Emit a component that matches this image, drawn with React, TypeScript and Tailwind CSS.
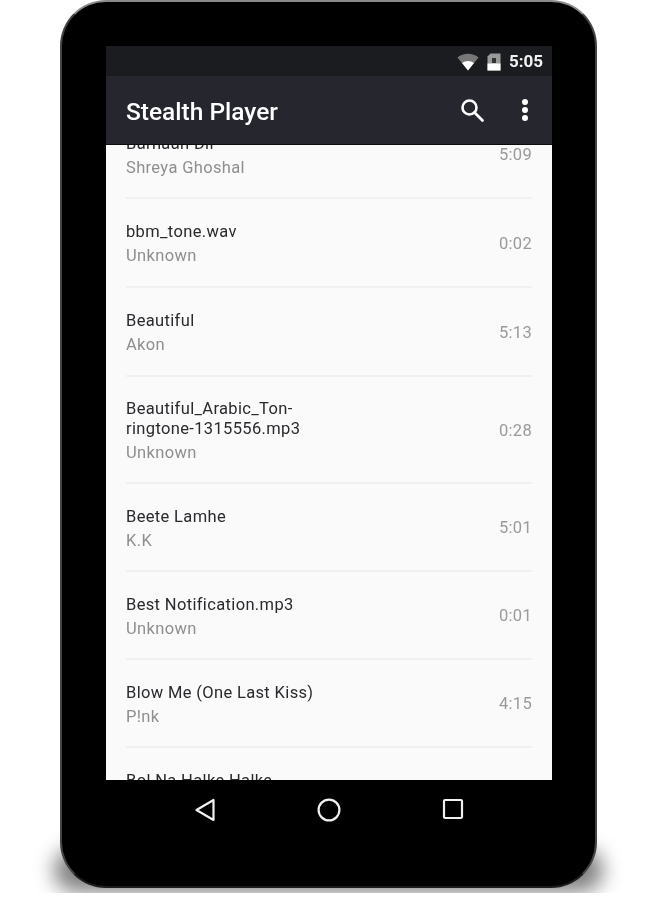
import React from "react";

type Song = { title: string[]; artist: string; time: string; rowClass: string };

const songs: Song[] = [
  { title: ["Barnaan Dil"], artist: "Shreya Ghoshal", time: "5:09", rowClass: "h-[88px]" },
  { title: ["bbm_tone.wav"], artist: "Unknown", time: "0:02", rowClass: "h-[89px]" },
  { title: ["Beautiful"], artist: "Akon", time: "5:13", rowClass: "h-[89px]" },
  { title: ["Beautiful_Arabic_Ton-", "ringtone-1315556.mp3"], artist: "Unknown", time: "0:28", rowClass: "h-[107px]" },
  { title: ["Beete Lamhe"], artist: "K.K", time: "5:01", rowClass: "h-[88px]" },
  { title: ["Best Notification.mp3"], artist: "Unknown", time: "0:01", rowClass: "h-[88px]" },
  { title: ["Blow Me (One Last Kiss)"], artist: "P!nk", time: "4:15", rowClass: "h-[88px]" },
  { title: ["Bol Na Halke Halke"], artist: "Rahat Fateh Ali Khan", time: "5:43", rowClass: "h-[88px]" },
];

function Row({ song }: { song: Song }) {
  return (
    <div className={`flex items-center justify-between border-b-2 border-[#f0f0f0] mx-[20px] pt-[3px] ${song.rowClass}`}>
      <div className="flex flex-col">
        {song.title.map((line) => (
          <div key={line} className="text-[16.5px] leading-[20px] text-[#2a2a2e] tracking-[0.35px]">{line}</div>
        ))}
        <div className="text-[16.5px] leading-[20px] mt-[4px] text-[#8f8f8f] tracking-[0.35px]">{song.artist}</div>
      </div>
      <div className="text-[16.5px] text-[#9a9a9a] tracking-[0.3px]">{song.time}</div>
    </div>
  );
}

export default function App() {
  return (
    <div className="relative w-[656px] h-[900px] bg-white pl-[60px] overflow-hidden font-['Roboto',sans-serif]">
      <div className="absolute left-0 top-0 w-full h-[893px] overflow-hidden">
        <div className="absolute left-[54px] top-[848px] w-[549px] h-[44px] rounded-[26px] bg-black/50 blur-[10px]" />
      </div>
      <div className="relative w-[537px] h-[888px] bg-black rounded-[46px] border-x-2 border-y-2 border-x-[#444444] border-t-[#8a8a8a] border-b-[#1c1c1c] pt-[44px] pl-[44px] flex flex-col blur-[0.4px]">
        <div className="w-[446px] h-[734px] flex flex-col overflow-hidden bg-[#fafafa]">
          <div className="relative z-10 shrink-0">
            <div className="h-[30px] bg-[#1b1c20] flex items-center justify-end pr-[9px] pt-[2px]">
              <svg width="22" height="18" viewBox="0 0 22 18" className="mr-[8px]">
                <path d="M11 17.5 0.5 4.5C6-.4 16-.4 21.5 4.5Z" fill="#777" />
                <path d="M11 17.5 5 10C8.5 7.2 13.5 7.2 17 10Z" fill="#fff" />
              </svg>
              <svg width="14" height="18" viewBox="0 0 14 18" className="mr-[8px]">
                <path d="M3.5 0.5H13.5V17.5H0.5V3.5Z" fill="#9a9a9a" />
                <path d="M0.5 10.5H13.5V17.5H0.5Z" fill="#fff" />
                <rect x="5" y="5" width="4" height="5" fill="#333" />
              </svg>
              <span className="text-[17px] font-bold text-[#f2f2f2]">5:05</span>
            </div>
            <div className="h-[69px] bg-[#25262e] border-b border-[#0c0c0e] flex items-center pl-[20px] pr-[20px]">
              <span className="text-[24.5px] font-medium text-white flex-1 pt-[5px]">Stealth Player</span>
              <svg width="26" height="26" viewBox="0 0 26 26" fill="none" stroke="white" className="mr-[37px]">
                <circle cx="10.5" cy="10.5" r="7" strokeWidth="2.6" />
                <path d="M15.5 15.5 23.5 23.5" strokeWidth="2.8" strokeLinecap="round" />
              </svg>
              <div className="flex flex-col gap-[2px] mr-[4px]">
                <div className="w-[6px] h-[6px] rounded-full bg-white" />
                <div className="w-[6px] h-[6px] rounded-full bg-white" />
                <div className="w-[6px] h-[6px] rounded-full bg-white" />
              </div>
            </div>
          </div>
          <div className="flex-1 overflow-hidden">
            <div className="mt-[-34px]">
              {songs.map((s) => (
                <Row key={s.title[0]} song={s} />
              ))}
            </div>
          </div>
        </div>
        <div className="w-[446px] flex-1 flex items-start justify-between pl-[88px] pr-[88px] pt-[18px]">
          <svg width="22" height="24" viewBox="0 0 22 24" fill="none" stroke="#f0f0f0" strokeWidth="2.2" strokeLinejoin="round">
            <path d="M19.5 2V22L2.5 12Z" />
          </svg>
          <svg width="24" height="24" viewBox="0 0 24 24" fill="none" stroke="#f0f0f0" strokeWidth="2.2">
            <circle cx="12" cy="12" r="10.4" />
          </svg>
          <svg width="22" height="22" viewBox="0 0 22 22" fill="none" stroke="#f0f0f0" strokeWidth="2.2" strokeLinejoin="round">
            <rect x="2" y="2" width="18" height="18" rx="1" />
          </svg>
        </div>
      </div>
    </div>
  );
}
